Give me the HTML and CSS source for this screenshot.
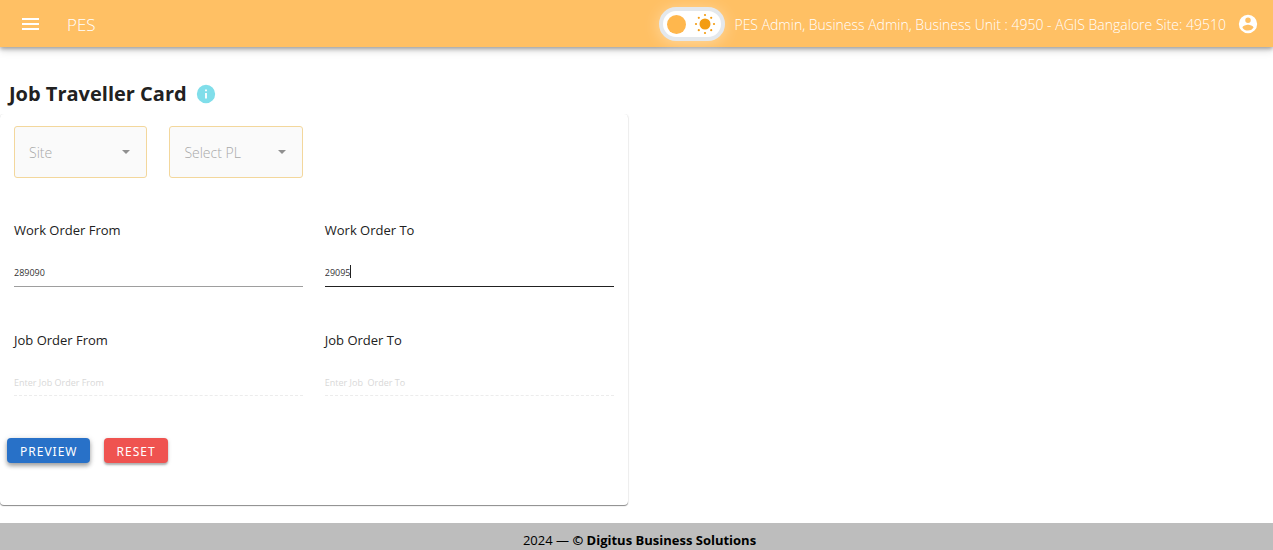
FILE: index.html
```html
<!DOCTYPE html>
<html lang="en">
<head>
<meta charset="utf-8">
<meta name="viewport" content="width=device-width, initial-scale=1">
<title>PES - Job Traveller Card</title>
<link rel="stylesheet" href="styles.css">
</head>
<body>
<header class="app-bar">
  <button class="icon-button" type="button" aria-label="Menu">
    <svg width="24" height="24" viewBox="0 0 24 24" fill="currentColor"><path d="M4 6h17v2H4V6m0 5h17v2H4v-2m0 5h17v2H4v-2z"/></svg>
  </button>
  <span class="brand">PES</span>
  <label class="theme-switch">
    <input class="theme-input" type="checkbox" aria-label="Dark theme">
    <span class="theme-knob"></span>
    <svg class="theme-sun" width="22" height="22" viewBox="0 0 22 22" fill="#f39c12"><circle cx="11" cy="11" r="5.5"/><circle cx="11" cy="2" r="1.1"/><circle cx="11" cy="20" r="1.1"/><circle cx="2" cy="11" r="1.1"/><circle cx="20" cy="11" r="1.1"/><circle cx="4.8" cy="4.8" r="1.1"/><circle cx="17.2" cy="4.8" r="1.1"/><circle cx="4.8" cy="17.2" r="1.1"/><circle cx="17.2" cy="17.2" r="1.1"/></svg>
  </label>
  <span class="user-info">PES Admin, Business Admin, Business Unit : 4950 - AGIS Bangalore Site: 49510</span>
  <button class="icon-button account" type="button" aria-label="Account">
    <svg width="22" height="22" viewBox="0 0 24 24" fill="currentColor"><path d="M12 19.2c-2.5 0-4.71-1.28-6-3.2.03-2 4-3.1 6-3.1s5.97 1.1 6 3.1a7.232 7.232 0 0 1-6 3.2M12 5a3 3 0 0 1 3 3 3 3 0 0 1-3 3 3 3 0 0 1-3-3 3 3 0 0 1 3-3m0-3A10 10 0 0 0 2 12a10 10 0 0 0 10 10 10 10 0 0 0 10-10A10 10 0 0 0 12 2z"/></svg>
  </button>
</header>
<main class="page">
  <h1 class="title">Job Traveller Card
    <svg width="22" height="22" viewBox="0 0 24 24" fill="#80deea" role="img" aria-label="Information"><path d="M13 9h-2V7h2m0 10h-2v-6h2m-1-9A10 10 0 0 0 2 12a10 10 0 0 0 10 10 10 10 0 0 0 10-10A10 10 0 0 0 12 2z"/></svg>
  </h1>
  <form class="card">
    <div class="fields">
      <div class="selects">
        <div class="select-box">
          <select class="select" aria-label="Site" disabled><option>Site</option></select>
          <svg class="arrow" width="24" height="24" viewBox="0 0 24 24" fill="#909090"><path d="M8 10h8l-4 4z"/></svg>
        </div>
        <div class="select-box">
          <select class="select" aria-label="Select PL" disabled><option>Select PL</option></select>
          <svg class="arrow" width="24" height="24" viewBox="0 0 24 24" fill="#909090"><path d="M8 10h8l-4 4z"/></svg>
        </div>
      </div>
      <div class="field">
        <label class="label" for="wo-from">Work Order From</label>
        <input class="input" id="wo-from" type="text" value="289090">
      </div>
      <div class="field">
        <label class="label" for="wo-to">Work Order To</label>
        <div class="active-box">
          <input class="input input-active" id="wo-to" type="text" value="29095">
          <span class="caret"></span>
        </div>
      </div>
      <div class="field">
        <label class="label" for="jo-from">Job Order From</label>
        <input class="input" id="jo-from" type="text" placeholder="Enter Job Order From" disabled>
      </div>
      <div class="field">
        <label class="label" for="jo-to">Job Order To</label>
        <input class="input" id="jo-to" type="text" placeholder="Enter Job  Order To" disabled>
      </div>
    </div>
    <div class="actions">
      <button class="button preview" type="button">PREVIEW</button>
      <button class="button reset" type="reset">RESET</button>
    </div>
  </form>
</main>
<footer class="footer"><span>2024 — <strong>© Digitus Business Solutions</strong></span></footer>
</body>
</html>
```
FILE: styles.css
```css
* {
  box-sizing: border-box;
}

body {
  margin: 0;
  min-height: 100vh;
  display: flex;
  flex-direction: column;
  background: #fff;
  color: #212121;
  font-family: "Open Sans", "Noto Sans", sans-serif;
  font-size: 13px;
}

svg {
  display: block;
}

.app-bar {
  display: flex;
  align-items: center;
  height: 47px;
  padding: 1px 14px 0 18px;
  background: #ffc064;
  color: #fff;
  box-shadow: 0 2px 4px rgba(0, 0, 0, 0.3), 0 4px 8px rgba(0, 0, 0, 0.12);
}

.icon-button {
  padding: 0;
  border: 0;
  background: none;
  color: inherit;
}

.brand {
  margin: 0 auto 0 25px;
  font-size: 17px;
  font-weight: 300;
}

.theme-switch {
  display: flex;
  align-items: center;
  gap: 8px;
  width: 66px;
  height: 34px;
  margin-right: 9px;
  padding: 0 4px;
  border: 4px solid #e4e8ec;
  border-radius: 17px;
  background: #fff;
  box-shadow: 0 2px 16px rgba(255, 255, 255, 0.4);
}

.theme-input {
  position: absolute;
  opacity: 0;
}

.theme-knob {
  width: 19px;
  height: 19px;
  border-radius: 50%;
  background: #ffb74d;
}

.user-info {
  font-size: 14px;
  font-weight: 300;
}

.account {
  margin-left: 11px;
}

.page {
  flex: 1;
}

.title {
  display: flex;
  align-items: center;
  gap: 8px;
  margin: 0;
  padding: 33px 0 6px 9px;
  font-size: 20px;
  line-height: 28px;
}

.card {
  width: calc(50% - 9px);
  padding: 12px 14px 42px;
  border-radius: 4px;
  box-shadow: 0 1px 1px rgba(0, 0, 0, 0.45), 0 0 2px rgba(0, 0, 0, 0.1);
  clip-path: inset(0 -3px -3px 0);
}

.fields {
  display: grid;
  grid-template-columns: 1fr 1fr;
  column-gap: 22px;
}

.selects {
  display: grid;
  grid-template-columns: 1fr 1fr;
  grid-column: 1;
  gap: 22px;
  margin-bottom: 42px;
}

.select-box {
  position: relative;
}

.select {
  appearance: none;
  display: block;
  width: 100%;
  height: 52px;
  padding: 0 14px;
  border: 1px solid #f3d79c;
  border-radius: 3px;
  background: #fafafa;
  color: #a8a8a8;
  font: 300 14px "Open Sans", "Noto Sans", sans-serif;
  opacity: 1;
}

.arrow {
  position: absolute;
  top: 14px;
  right: 9px;
  pointer-events: none;
}

.field {
  grid-row: 2;
  height: 110px;
}

.field:nth-of-type(n + 4) {
  grid-row: 3;
}

.label {
  display: block;
  line-height: 20px;
}

.input {
  display: block;
  width: 100%;
  height: 27px;
  margin-top: 20px;
  padding: 0 0 1px;
  border: 0;
  border-bottom: 1px solid #9e9e9e;
  border-radius: 0;
  outline: 0;
  background: none;
  color: #333;
  font: 9px "Open Sans", "Noto Sans", sans-serif;
}

.input-active {
  border-color: #212121;
}

.active-box {
  position: relative;
}

.caret {
  position: absolute;
  left: 25px;
  bottom: 9px;
  width: 1px;
  height: 13px;
  background: #212121;
}

.input:disabled {
  height: 26px;
  border-bottom: 1px dashed #ececec;
}

.input::placeholder {
  color: #d8d8d8;
  opacity: 1;
}

.actions {
  display: flex;
  gap: 14px;
  margin: -2px 0 0 -7px;
}

.button {
  height: 25px;
  padding: 2px 12px 0 13px;
  border: 0;
  border-radius: 4px;
  color: #fff;
  font: 12px "Noto Sans", "Open Sans", sans-serif;
  letter-spacing: 1px;
  box-shadow: 0 2px 2px rgba(0, 0, 0, 0.25), 0 1px 4px rgba(0, 0, 0, 0.15);
}

.preview {
  background: #2871c8;
  box-shadow: 0 3px 4px rgba(0, 0, 0, 0.3), 0 1px 6px rgba(0, 0, 0, 0.15);
}

.reset {
  background: #ef5350;
}

.footer {
  display: flex;
  justify-content: center;
  padding: 7px 0 0 6px;
  background: #bdbdbd;
  color: #000;
  line-height: 20px;
}
```
